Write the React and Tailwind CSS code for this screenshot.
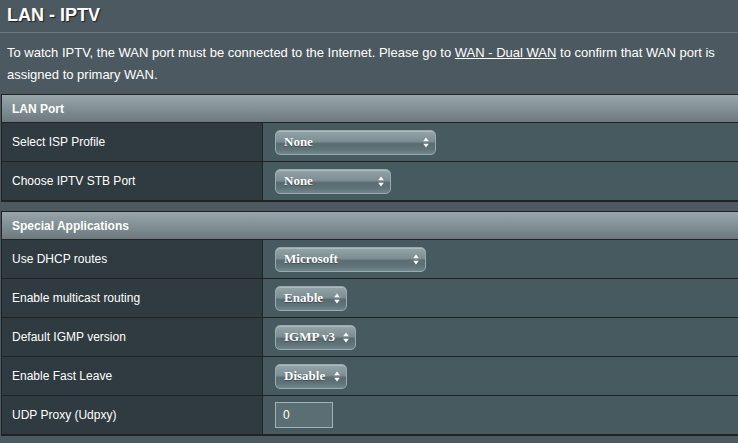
const selectBg =
  'bg-[linear-gradient(to_bottom,#94a4a9_0%,#7d8f94_45%,#5a6c72_55%,#607378_80%,#73868b_100%)]'

function Arrows() {
  return (
    <svg width="6" height="11" viewBox="0 0 6 11" className="shrink-0">
      <path d="M3 0.5 L5.8 4.3 L0.2 4.3 Z" fill="#fff" />
      <path d="M3 10.5 L5.8 6.7 L0.2 6.7 Z" fill="#fff" />
    </svg>
  )
}

function FakeSelect({ value, width }) {
  return (
    <div
      className={`flex h-[25px] items-center justify-between rounded-[5px] border border-[#9aa9ad] pl-[8px] pr-[6px] shadow-[inset_0_1px_0_rgba(255,255,255,0.25)] ${selectBg}`}
      style={{ width }}
    >
      <span className="font-['Liberation_Serif',serif] text-[13px] font-bold text-white [text-shadow:0_1px_1px_rgba(0,0,0,0.35)]">
        {value}
      </span>
      <Arrows />
    </div>
  )
}

function Row({ label, children }) {
  return (
    <div className="flex h-[39px] border-b border-[#222]">
      <div className="flex w-[261px] items-center border-r border-[#222] bg-[#2f3b40] pl-[10px] text-[12px] text-white">
        {label}
      </div>
      <div className="flex flex-1 items-center bg-[#475a60] pl-[12px]">{children}</div>
    </div>
  )
}

function Section({ title, children }) {
  return (
    <div className="ml-[1px] w-[760px] border border-r-0 border-[#222]">
      <div className="flex h-[28px] items-center border-b border-[#222] bg-[linear-gradient(to_bottom,#98a6ab,#6c797f)] pl-[10px] text-[12px] font-bold text-white">
        {title}
      </div>
      {children}
    </div>
  )
}

export default function App() {
  return (
    <div className="h-[443px] w-[738px] overflow-hidden bg-[#4d5960] font-['Liberation_Sans',Arial,sans-serif] text-white">
      <div className="px-[7px] pt-[2px]">
        <h1 className="h-[30px] text-[18px] font-bold leading-[26px] [text-shadow:1px_1px_1px_#1a1f22]">LAN - IPTV</h1>
      </div>
      <div className="h-[1px] bg-[#6b7a82]" />
      <p className="px-[7px] pt-[9px] text-[13px] leading-[22px]">
        To watch IPTV, the WAN port must be connected to the Internet. Please go to{' '}
        <span className="underline">WAN - Dual WAN</span> to confirm that WAN port is assigned to
        primary WAN.
      </p>
      <div className="mt-[8px]">
        <Section title="LAN Port">
          <Row label="Select ISP Profile">
            <FakeSelect value="None" width={161} />
          </Row>
          <Row label="Choose IPTV STB Port">
            <FakeSelect value="None" width={116} />
          </Row>
        </Section>
      </div>
      <div className="mt-[9px]">
        <Section title="Special Applications">
          <Row label="Use DHCP routes">
            <FakeSelect value="Microsoft" width={151} />
          </Row>
          <Row label="Enable multicast routing">
            <FakeSelect value="Enable" width={72} />
          </Row>
          <Row label="Default IGMP version">
            <FakeSelect value="IGMP v3" width={81} />
          </Row>
          <Row label="Enable Fast Leave">
            <FakeSelect value="Disable" width={72} />
          </Row>
          <Row label="UDP Proxy (Udpxy)">
            <div className="flex h-[26px] w-[58px] items-center border border-[#a5b1b5] bg-[#5b6e73] pl-[7px] text-[12px] text-white">
              0
            </div>
          </Row>
        </Section>
      </div>
    </div>
  )
}
